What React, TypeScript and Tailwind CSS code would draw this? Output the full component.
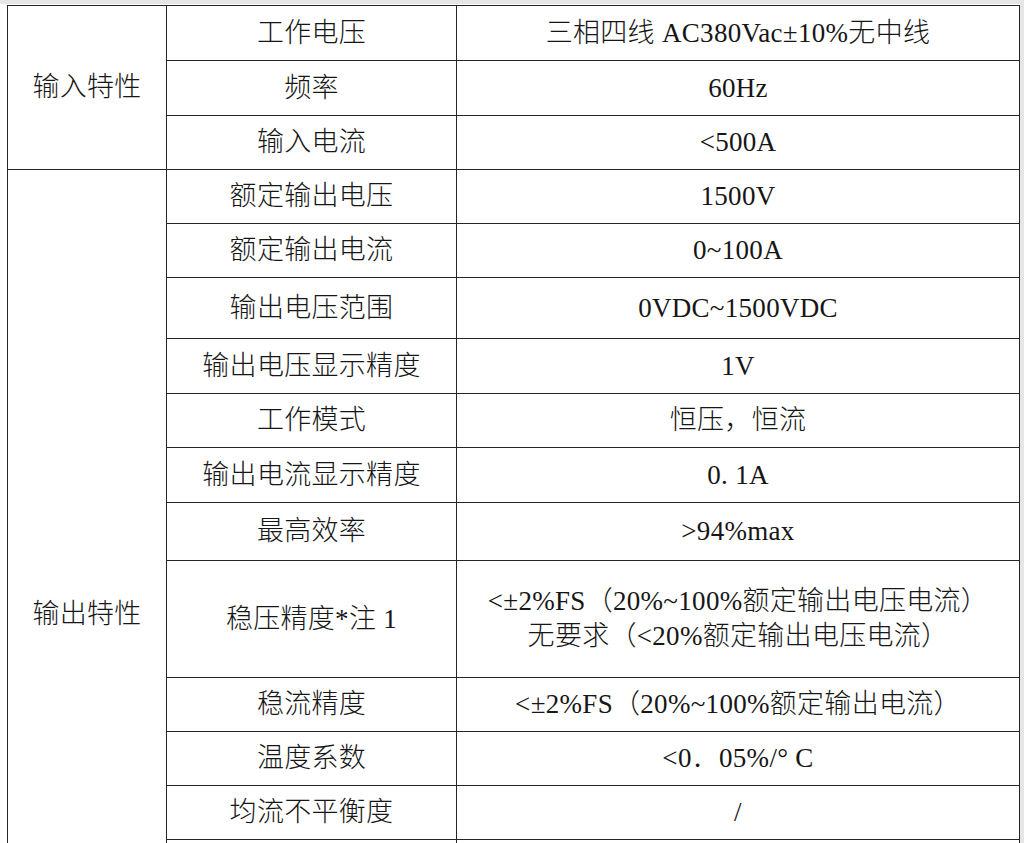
import React from 'react';

type Row = { name: string; value: React.ReactNode; h: string };

const inputRows: Row[] = [
  { name: '工作电压', value: '三相四线 AC380Vac±10%无中线', h: 'h-[55px]' },
  { name: '频率', value: '60Hz', h: 'h-[55px]' },
  { name: '输入电流', value: '<500A', h: 'h-[54px]' },
];

const outputRows: Row[] = [
  { name: '额定输出电压', value: '1500V', h: 'h-[54px]' },
  { name: '额定输出电流', value: '0~100A', h: 'h-[54px]' },
  { name: '输出电压范围', value: '0VDC~1500VDC', h: 'h-[61px]' },
  { name: '输出电压显示精度', value: '1V', h: 'h-[55px]' },
  { name: '工作模式', value: '恒压，恒流', h: 'h-[54px]' },
  { name: '输出电流显示精度', value: '0. 1A', h: 'h-[55px]' },
  { name: '最高效率', value: '>94%max', h: 'h-[58px]' },
  {
    name: '稳压精度*注 1',
    value: (
      <span className="leading-[35px]">
        {'<±2%FS（20%~100%额定输出电压电流）'}
        <br />
        {'无要求（<20%额定输出电压电流）'}
      </span>
    ),
    h: 'h-[117px]',
  },
  { name: '稳流精度', value: '<±2%FS（20%~100%额定输出电流）', h: 'h-[54px]' },
  { name: '温度系数', value: '<0．05%/° C', h: 'h-[54px]' },
  { name: '均流不平衡度', value: '/', h: 'h-[54px]' },
  // rows below the visible area
  { name: '', value: '', h: 'h-[55px]' },
  { name: '', value: '', h: 'h-[55px]' },
  { name: '', value: '', h: 'h-[55px]' },
  { name: '', value: '', h: 'h-[55px]' },
];

function Group({ title, rows }: { title: string; rows: Row[] }) {
  return (
    <div className="flex">
      <div className="flex w-[159px] shrink-0 items-center justify-center border-r border-b border-[#262626]">
        {title}
      </div>
      <div className="flex flex-col">
        {rows.map((r, i) => (
          <div key={i} className={`flex ${r.h}`}>
            <div className="flex w-[290px] items-center justify-center border-r border-b border-[#262626] text-center">
              {r.name}
            </div>
            <div className="flex w-[563px] items-center justify-center border-r border-b border-[#262626] text-center">
              {r.value}
            </div>
          </div>
        ))}
      </div>
    </div>
  );
}

export default function App() {
  return (
    <div className="h-[843px] w-[1024px] overflow-hidden bg-[#e6e6e6]">
      <div className="mt-[4px] mr-[4px] h-full bg-white pt-[1px] pl-[7px] font-['Liberation_Serif','Noto_Sans_CJK_SC',serif] text-[27px] font-light tracking-[0.3px] text-[#161616]">
        <div className="w-[1013px] border-t border-l border-[#262626]">
          <Group title="输入特性" rows={inputRows} />
          <Group title="输出特性" rows={outputRows} />
        </div>
      </div>
    </div>
  );
}
